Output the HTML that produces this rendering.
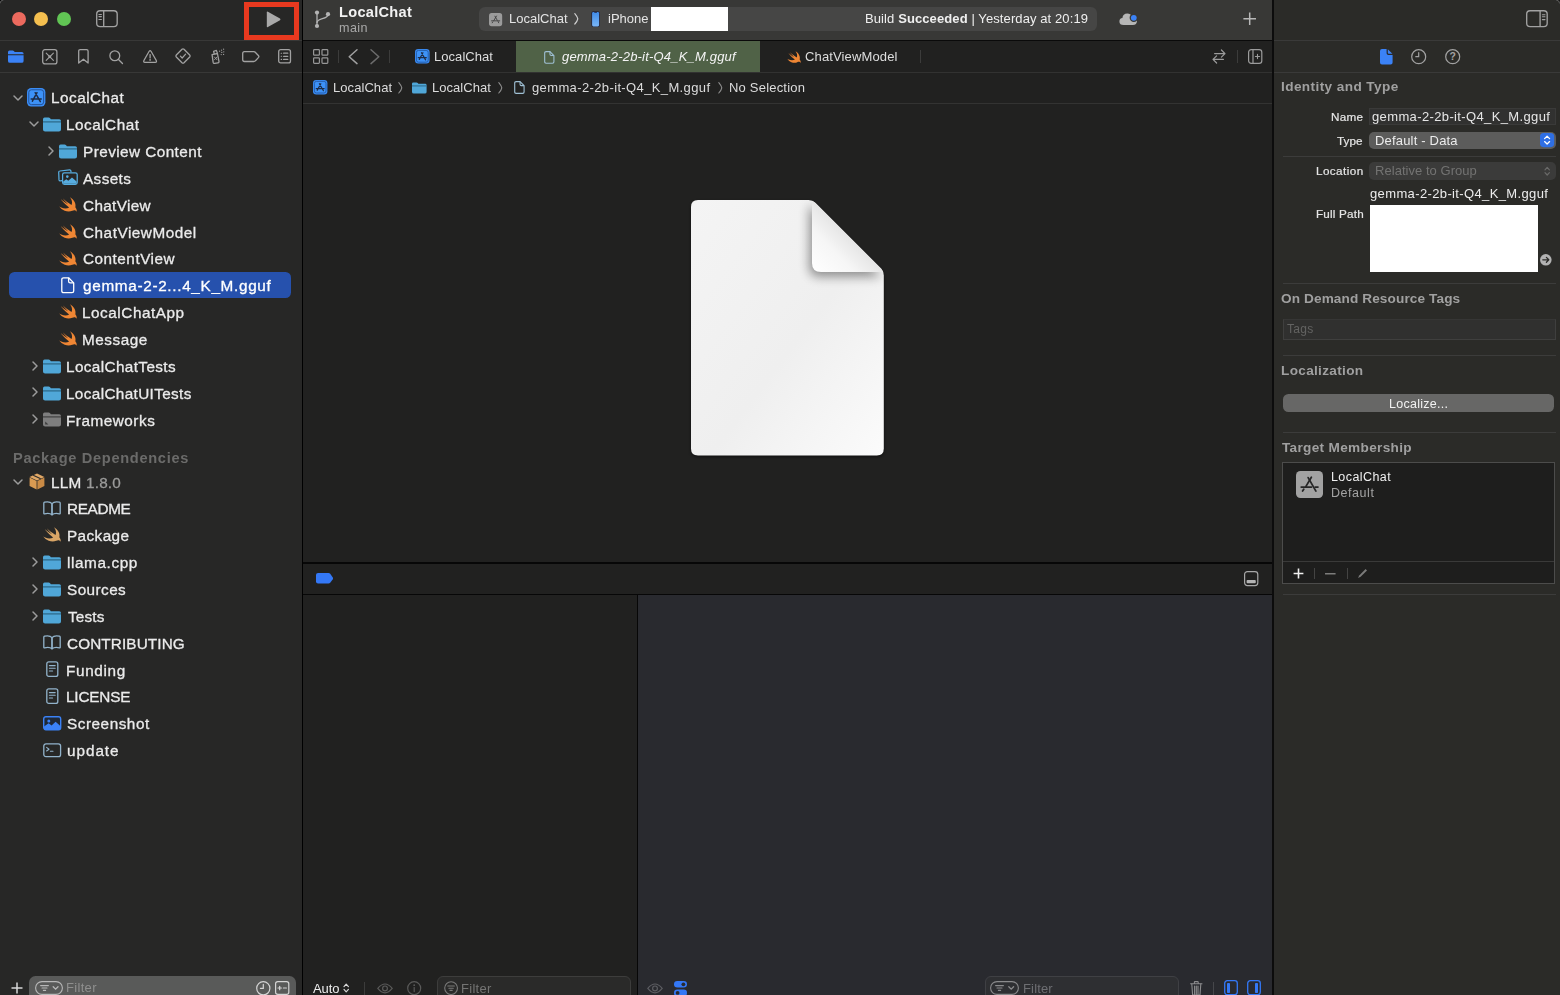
<!DOCTYPE html>
<html lang="en">
<head>
<meta charset="utf-8">
<title>LocalChat — gemma-2-2b-it-Q4_K_M.gguf</title>
<style>
*{box-sizing:border-box;margin:0;padding:0}
html,body{width:1560px;height:995px;overflow:hidden;background:#212120}
body{font-family:"Liberation Sans",sans-serif;color:#e6e6e6;-webkit-font-smoothing:antialiased}
#win{position:relative;width:1560px;height:995px;overflow:hidden;background:#212120}
.abs{position:absolute}
.ic{position:absolute;display:block;overflow:visible}
.t{position:absolute;white-space:nowrap;line-height:1;display:block;will-change:transform}
/* panes */
#nav{position:absolute;left:0;top:0;width:302px;height:995px;background:#272726}
#vd1{position:absolute;left:302px;top:0;width:1px;height:995px;background:#000}
#ctr{position:absolute;left:303px;top:0;width:969px;height:995px;background:#212120}
#vd2{position:absolute;left:1272px;top:0;width:2px;height:995px;background:#0c0c0c}
#insp{position:absolute;left:1274px;top:0;width:286px;height:995px;background:#2b2b28}
.hl{position:absolute;height:1px}
.vl{position:absolute;width:1px}
/* nav text */
.nt{font-size:15px;color:#e9e9e9;letter-spacing:.42px}
.sel{position:absolute;left:9px;top:272px;width:282px;height:26px;border-radius:5.5px;background:#2651ad}
.hdr{font-size:14px;font-weight:bold;color:#6b6b6b;letter-spacing:.1px}
.f13{font-size:13px;letter-spacing:.3px;color:#dcdcdc}
.f12{font-size:12px;letter-spacing:.2px}
.lab{font-size:11.5px;color:#e2e2e2;letter-spacing:.25px;text-align:right}
.sec{font-size:13px;font-weight:bold;color:#a0a0a0;letter-spacing:.05px}
.fld{position:absolute;border-radius:5px}
</style>
</head>
<body>
<div id="win">
<div id="nav">
<div class="abs" style="left:12.1px;top:12px;width:14px;height:14px;border-radius:50%;background:#ec6a5e"></div>
<div class="abs" style="left:34.4px;top:12px;width:14px;height:14px;border-radius:50%;background:#f4bf4f"></div>
<div class="abs" style="left:56.7px;top:12px;width:14px;height:14px;border-radius:50%;background:#61c554"></div>
<svg class="ic" style="left:95.5px;top:9.9px" width="21.9" height="17.3" viewBox="0 0 21.9 17.3" ><g fill="none" stroke="#a2a2a2" stroke-width="1.35"><rect x="0.7" y="0.7" width="20.5" height="15.9" rx="3.4"/><path d="M7.7 0.7 V16.6"/><path d="M2.9 4.5 H5.400 M2.900 6.600 H5.400 M2.900 9.500 H5.400" stroke-width="1.1" stroke-linecap="round"/></g></svg>
<svg class="ic" style="left:0px;top:0px" width="3.6" height="3.6" viewBox="0 0 5 5" ><path d="M0 0 H4.6 Q0 0 0 4.600 Z" fill="#050505"/><path d="M0 4.800 Q0.200 0.200 4.800 0" fill="none" stroke="#7a7a7a" stroke-width="0.9"/></svg>
<div class="abs" style="left:244px;top:2px;width:55px;height:38px;border:5.5px solid #e8391f"></div>
<svg class="ic" style="left:265.5px;top:10.6px" width="15.4" height="16.8" viewBox="0 0 15.4 16.8" ><path d="M0.8 1.4 Q0.8 0.2 1.9 0.8 L14 7.5 Q15 8.4 14 9.3 L1.9 16 Q0.8 16.6 0.8 15.4 Z" fill="#a9a9a9"/></svg>
<div class="hl" style="left:0;top:40px;width:302px;background:#383837"></div>
<div class="hl" style="left:0;top:72px;width:302px;background:#383837"></div>
<svg class="ic" style="left:7.8px;top:49.8px" width="15.6" height="13" viewBox="0 0 16.2 13.2" ><path d="M0 2 Q0 0.4 1.6 0.4 H4.8 Q5.7 0.4 6.3 1.1 L7 2 H14.4 Q16.2 2 16.2 3.8 V4.2 H0 Z" fill="#3b82f6"/><path d="M0 5.2 H16.2 V11.2 Q16.2 13.2 14.2 13.2 H2 Q0 13.2 0 11.2 Z" fill="#3b82f6"/></svg>
<svg class="ic" style="left:41.6px;top:48.6px" width="15.6" height="15.6" viewBox="0 0 15.6 15.6" ><g fill="none" stroke="#a2a2a2" stroke-width="1.3" stroke-linecap="round" stroke-linejoin="round"><rect x="0.7" y="0.7" width="14.2" height="14.2" rx="2.2"/><path d="M4.2 4.2 L11.4 11.4 M11.4 4.2 L4.2 11.4" stroke-width="1.1"/></g><circle cx="7.8" cy="7.8" r="1.5" fill="#a2a2a2"/></svg>
<svg class="ic" style="left:77.6px;top:49px" width="10.8" height="15" viewBox="0 0 10.8 15" ><g fill="none" stroke="#a2a2a2" stroke-width="1.3" stroke-linecap="round" stroke-linejoin="round"><path d="M0.7 2.2 Q0.7 0.7 2.2 0.7 H8.6 Q10.1 0.7 10.1 2.2 V14 L5.4 10.2 L0.7 14 Z"/></g></svg>
<svg class="ic" style="left:109.4px;top:49.6px" width="14.4" height="14.4" viewBox="0 0 14.4 14.4" ><g fill="none" stroke="#a2a2a2" stroke-width="1.3" stroke-linecap="round" stroke-linejoin="round" stroke-width="1.5"><circle cx="5.8" cy="5.8" r="4.9"/><path d="M9.5 9.5 L13.5 13.5"/></g></svg>
<svg class="ic" style="left:142.9px;top:49.6px" width="14.2" height="13" viewBox="0 0 15.2 13.8" ><g fill="none" stroke="#a2a2a2" stroke-width="1.3" stroke-linecap="round" stroke-linejoin="round"><path d="M6.6 1.3 Q7.6 -0.1 8.6 1.3 L14.3 11.3 Q15 13 13.2 13.1 H2 Q0.2 13 0.9 11.3 Z"/><path d="M7.6 4.8 V8.4" stroke-width="1.4"/></g><circle cx="7.6" cy="10.6" r="0.9" fill="#a2a2a2"/></svg>
<svg class="ic" style="left:175.4px;top:48.4px" width="16" height="16" viewBox="0 0 16 16" ><g fill="none" stroke="#a2a2a2" stroke-width="1.3" stroke-linecap="round" stroke-linejoin="round"><path d="M7 1.3 Q8 0.4 9 1.3 L14.7 7 Q15.6 8 14.7 9 L9 14.7 Q8 15.6 7 14.7 L1.3 9 Q0.4 8 1.3 7 Z"/><path d="M5.4 8.2 L7.2 10 L10.6 6.2" stroke-width="1.2"/></g></svg>
<svg class="ic" style="left:208.6px;top:48.4px" width="17.4" height="16" viewBox="0 0 17.4 16" ><g fill="none" stroke="#a2a2a2" stroke-width="1.3" stroke-linecap="round" stroke-linejoin="round" stroke-width="1.1"><path d="M2.6 7 L7.8 5.2 L10.4 12.8 Q10.8 14 9.6 14.4 L6.4 15.4 Q5.2 15.8 4.8 14.6 Z" transform="rotate(8 6 10)"/><path d="M5.2 5.6 L4.6 3.4 L7.4 2.4 L8.2 4.6"/><path d="M5.4 9 L8 11.8 M8 9 L5.6 11.6" stroke-width="0.9"/></g><g fill="#a2a2a2"><circle cx="10.6" cy="3.2" r=".6"/><circle cx="12.6" cy="2.2" r=".6"/><circle cx="14.6" cy="1.2" r=".6"/><circle cx="12.8" cy="4.4" r=".6"/><circle cx="14.8" cy="3.8" r=".6"/><circle cx="12.2" cy="6.6" r=".6"/><circle cx="14.6" cy="6.4" r=".6"/></g></svg>
<svg class="ic" style="left:241.6px;top:51px" width="17.6" height="11.2" viewBox="0 0 17.6 11.2" ><g fill="none" stroke="#a2a2a2" stroke-width="1.3" stroke-linecap="round" stroke-linejoin="round"><path d="M2.4 0.7 H11.8 Q12.8 0.7 13.5 1.5 L16.6 4.8 Q17.2 5.6 16.6 6.4 L13.5 9.7 Q12.8 10.5 11.8 10.5 H2.4 Q0.7 10.5 0.7 8.8 V2.4 Q0.7 0.7 2.4 0.7 Z"/></g></svg>
<svg class="ic" style="left:278px;top:49px" width="13.2" height="14.6" viewBox="0 0 13.2 14.6" ><g fill="none" stroke="#a2a2a2" stroke-width="1.3" stroke-linecap="round" stroke-linejoin="round"><rect x="0.7" y="0.7" width="11.8" height="13.2" rx="2"/><path d="M5.6 4.2 H9.8 M5.6 7.3 H9.8 M5.6 10.4 H9.8" stroke-width="1.2"/><path d="M3.2 4.2 H3.6 M3.2 7.3 H3.6 M3.2 10.4 H3.6" stroke-width="1.1"/></g></svg>
<div class="sel"></div>
<svg class="ic" style="left:12.9px;top:94.6px" width="10" height="6" viewBox="0 0 10 6" ><path d="M1 1 L5 5 L9 1" fill="none" stroke="#9c9c9c" stroke-width="1.5" stroke-linecap="round" stroke-linejoin="round"/></svg>
<svg class="ic" style="left:27.2px;top:87.9px" width="18.4" height="18.4" viewBox="0 0 16 16" ><rect x="0" y="0" width="16" height="16" rx="3.6" fill="#3a8cf4"/><rect x="1.55" y="1.55" width="12.9" height="12.9" rx="2.3" fill="#3d92f7" stroke="#21529a" stroke-width="0.85"/><path d="M8.7 4.1 L4.7 11.5 M7.1 4.1 L11.6 11.9 M3.6 9.5 H12.4" fill="none" stroke="#1e2c46" stroke-width="1.3" stroke-linecap="round"/></svg>
<span class="t" style="left:50.84px;top:89.87px;font-size:15.3px;letter-spacing:0.497px;color:#ebebeb;-webkit-text-stroke:0.3px #ebebeb;">LocalChat</span>
<svg class="ic" style="left:28.9px;top:121.44999999999999px" width="10" height="6" viewBox="0 0 10 6" ><path d="M1 1 L5 5 L9 1" fill="none" stroke="#9c9c9c" stroke-width="1.5" stroke-linecap="round" stroke-linejoin="round"/></svg>
<svg class="ic" style="left:43.4px;top:117.05px" width="18" height="14.5" viewBox="0 0 18 14.5" preserveAspectRatio="none"><path d="M0 2.2 Q0 0.6 1.6 0.6 H5.6 Q6.5 0.6 7.1 1.3 L7.9 2.2 H16.2 Q18 2.2 18 4 V12.4 Q18 14.5 15.9 14.5 H2.1 Q0 14.5 0 12.4 Z" fill="#50a7d8"/><path d="M0 4.9 H18" stroke="#27607f" stroke-width="1.1"/></svg>
<span class="t" style="left:66.44px;top:116.87px;font-size:15.3px;letter-spacing:0.509px;color:#ebebeb;-webkit-text-stroke:0.3px #ebebeb;">LocalChat</span>
<svg class="ic" style="left:47.7px;top:145.7px" width="6" height="10" viewBox="0 0 6 10" ><path d="M1 1 L5 5 L1 9" fill="none" stroke="#9c9c9c" stroke-width="1.5" stroke-linecap="round" stroke-linejoin="round"/></svg>
<svg class="ic" style="left:59.4px;top:143.89999999999998px" width="18" height="14.5" viewBox="0 0 18 14.5" preserveAspectRatio="none"><path d="M0 2.2 Q0 0.6 1.6 0.6 H5.6 Q6.5 0.6 7.1 1.3 L7.9 2.2 H16.2 Q18 2.2 18 4 V12.4 Q18 14.5 15.9 14.5 H2.1 Q0 14.5 0 12.4 Z" fill="#50a7d8"/><path d="M0 4.9 H18" stroke="#27607f" stroke-width="1.1"/></svg>
<span class="t" style="left:82.54px;top:143.87px;font-size:15.3px;letter-spacing:0.444px;color:#ebebeb;-webkit-text-stroke:0.3px #ebebeb;">Preview Content</span>
<svg class="ic" style="left:58.3px;top:168.95000000000002px" width="20" height="16.6" viewBox="0 0 20 16.6" ><g fill="none" stroke="#57ade0" stroke-width="1.25" stroke-linejoin="round"><path d="M4.2 11.6 L2.3 11.9 Q1.2 12 1 10.9 L0.7 3.2 Q0.7 2.1 1.8 2 L11.6 0.8 Q12.7 0.7 12.9 1.8 L13 3.3"/><rect x="4.6" y="3.8" width="14.6" height="11.6" rx="1.8"/></g><circle cx="9.3" cy="7.6" r="1.3" fill="#57ade0"/><path d="M5.2 14.8 V12.6 L8.3 10.3 L10.3 11.8 L14 8.4 L18.6 12.4 V14.8 Z" fill="#57ade0"/></svg>
<span class="t" style="left:83.47px;top:170.87px;font-size:15.3px;letter-spacing:0.394px;color:#ebebeb;-webkit-text-stroke:0.3px #ebebeb;">Assets</span>
<svg class="ic" style="left:59.4px;top:196.8px" width="18" height="15" viewBox="2.2 3.2 18.6 16.8" preserveAspectRatio="none"><path d="M13.543 3.41c4.114 2.47 6.545 7.162 5.549 11.131-.024.093-.05.181-.076.272l.002.001c2.062 2.538 1.5 5.258 1.236 4.745-1.072-2.086-3.066-1.568-4.088-1.043a6.803 6.803 0 0 1-.281.158l-.02.012-.002.002c-2.115 1.123-4.957 1.205-7.812-.022a12.568 12.568 0 0 1-5.64-4.838c.649.48 1.35.902 2.097 1.252 3.019 1.414 6.051 1.311 8.197-.002C9.651 12.73 7.101 9.67 5.146 7.191a10.628 10.628 0 0 1-1.005-1.384c2.34 2.142 6.038 4.83 7.365 5.576C8.69 8.408 6.208 4.743 6.324 4.86c4.436 4.47 8.528 6.996 8.528 6.996.154.085.27.154.36.213.085-.215.16-.437.224-.668.708-2.588-.09-5.548-1.893-7.992z" fill="#ef8634"/></svg>
<span class="t" style="left:83.02px;top:197.87px;font-size:15.3px;letter-spacing:0.351px;color:#ebebeb;-webkit-text-stroke:0.3px #ebebeb;">ChatView</span>
<svg class="ic" style="left:59.4px;top:223.65px" width="18" height="15" viewBox="2.2 3.2 18.6 16.8" preserveAspectRatio="none"><path d="M13.543 3.41c4.114 2.47 6.545 7.162 5.549 11.131-.024.093-.05.181-.076.272l.002.001c2.062 2.538 1.5 5.258 1.236 4.745-1.072-2.086-3.066-1.568-4.088-1.043a6.803 6.803 0 0 1-.281.158l-.02.012-.002.002c-2.115 1.123-4.957 1.205-7.812-.022a12.568 12.568 0 0 1-5.64-4.838c.649.48 1.35.902 2.097 1.252 3.019 1.414 6.051 1.311 8.197-.002C9.651 12.73 7.101 9.67 5.146 7.191a10.628 10.628 0 0 1-1.005-1.384c2.34 2.142 6.038 4.83 7.365 5.576C8.69 8.408 6.208 4.743 6.324 4.86c4.436 4.47 8.528 6.996 8.528 6.996.154.085.27.154.36.213.085-.215.16-.437.224-.668.708-2.588-.09-5.548-1.893-7.992z" fill="#ef8634"/></svg>
<span class="t" style="left:82.82px;top:224.87px;font-size:15.3px;letter-spacing:0.529px;color:#ebebeb;-webkit-text-stroke:0.3px #ebebeb;">ChatViewModel</span>
<svg class="ic" style="left:59.4px;top:250.50000000000003px" width="18" height="15" viewBox="2.2 3.2 18.6 16.8" preserveAspectRatio="none"><path d="M13.543 3.41c4.114 2.47 6.545 7.162 5.549 11.131-.024.093-.05.181-.076.272l.002.001c2.062 2.538 1.5 5.258 1.236 4.745-1.072-2.086-3.066-1.568-4.088-1.043a6.803 6.803 0 0 1-.281.158l-.02.012-.002.002c-2.115 1.123-4.957 1.205-7.812-.022a12.568 12.568 0 0 1-5.64-4.838c.649.48 1.35.902 2.097 1.252 3.019 1.414 6.051 1.311 8.197-.002C9.651 12.73 7.101 9.67 5.146 7.191a10.628 10.628 0 0 1-1.005-1.384c2.34 2.142 6.038 4.83 7.365 5.576C8.69 8.408 6.208 4.743 6.324 4.86c4.436 4.47 8.528 6.996 8.528 6.996.154.085.27.154.36.213.085-.215.16-.437.224-.668.708-2.588-.09-5.548-1.893-7.992z" fill="#ef8634"/></svg>
<span class="t" style="left:82.82px;top:250.87px;font-size:15.3px;letter-spacing:0.509px;color:#ebebeb;-webkit-text-stroke:0.3px #ebebeb;">ContentView</span>
<svg class="ic" style="left:61.4px;top:276.55000000000007px" width="13.5" height="16.5" viewBox="0 0 13.5 16.5" ><g fill="none" stroke="#ffffff" stroke-width="1.3" stroke-linejoin="round"><path d="M2.6 0.8 H7.6 L12.7 5.9 V14 Q12.7 15.7 11 15.7 H2.6 Q0.8 15.7 0.8 14 V2.5 Q0.8 0.8 2.6 0.8 Z"/><path d="M7.6 0.8 V4.3 Q7.6 5.9 9.2 5.9 H12.7"/></g></svg>
<span class="t" style="left:82.96px;top:277.87px;font-size:15.3px;letter-spacing:0.683px;color:#ffffff;-webkit-text-stroke:0.3px #ffffff;">gemma-2-2...4_K_M.gguf</span>
<svg class="ic" style="left:59.4px;top:304.2px" width="18" height="15" viewBox="2.2 3.2 18.6 16.8" preserveAspectRatio="none"><path d="M13.543 3.41c4.114 2.47 6.545 7.162 5.549 11.131-.024.093-.05.181-.076.272l.002.001c2.062 2.538 1.5 5.258 1.236 4.745-1.072-2.086-3.066-1.568-4.088-1.043a6.803 6.803 0 0 1-.281.158l-.02.012-.002.002c-2.115 1.123-4.957 1.205-7.812-.022a12.568 12.568 0 0 1-5.64-4.838c.649.48 1.35.902 2.097 1.252 3.019 1.414 6.051 1.311 8.197-.002C9.651 12.73 7.101 9.67 5.146 7.191a10.628 10.628 0 0 1-1.005-1.384c2.34 2.142 6.038 4.83 7.365 5.576C8.69 8.408 6.208 4.743 6.324 4.86c4.436 4.47 8.528 6.996 8.528 6.996.154.085.27.154.36.213.085-.215.16-.437.224-.668.708-2.588-.09-5.548-1.893-7.992z" fill="#ef8634"/></svg>
<span class="t" style="left:82.34px;top:304.87px;font-size:15.3px;letter-spacing:0.544px;color:#ebebeb;-webkit-text-stroke:0.3px #ebebeb;">LocalChatApp</span>
<svg class="ic" style="left:59.4px;top:331.04999999999995px" width="18" height="15" viewBox="2.2 3.2 18.6 16.8" preserveAspectRatio="none"><path d="M13.543 3.41c4.114 2.47 6.545 7.162 5.549 11.131-.024.093-.05.181-.076.272l.002.001c2.062 2.538 1.5 5.258 1.236 4.745-1.072-2.086-3.066-1.568-4.088-1.043a6.803 6.803 0 0 1-.281.158l-.02.012-.002.002c-2.115 1.123-4.957 1.205-7.812-.022a12.568 12.568 0 0 1-5.64-4.838c.649.48 1.35.902 2.097 1.252 3.019 1.414 6.051 1.311 8.197-.002C9.651 12.73 7.101 9.67 5.146 7.191a10.628 10.628 0 0 1-1.005-1.384c2.34 2.142 6.038 4.83 7.365 5.576C8.69 8.408 6.208 4.743 6.324 4.86c4.436 4.47 8.528 6.996 8.528 6.996.154.085.27.154.36.213.085-.215.16-.437.224-.668.708-2.588-.09-5.548-1.893-7.992z" fill="#ef8634"/></svg>
<span class="t" style="left:82.34px;top:331.87px;font-size:15.3px;letter-spacing:0.542px;color:#ebebeb;-webkit-text-stroke:0.3px #ebebeb;">Message</span>
<svg class="ic" style="left:31.7px;top:360.5px" width="6" height="10" viewBox="0 0 6 10" ><path d="M1 1 L5 5 L1 9" fill="none" stroke="#9c9c9c" stroke-width="1.5" stroke-linecap="round" stroke-linejoin="round"/></svg>
<svg class="ic" style="left:43.4px;top:358.7px" width="18" height="14.5" viewBox="0 0 18 14.5" preserveAspectRatio="none"><path d="M0 2.2 Q0 0.6 1.6 0.6 H5.6 Q6.5 0.6 7.1 1.3 L7.9 2.2 H16.2 Q18 2.2 18 4 V12.4 Q18 14.5 15.9 14.5 H2.1 Q0 14.5 0 12.4 Z" fill="#50a7d8"/><path d="M0 4.9 H18" stroke="#27607f" stroke-width="1.1"/></svg>
<span class="t" style="left:66.24px;top:358.87px;font-size:15.3px;letter-spacing:0.385px;color:#ebebeb;-webkit-text-stroke:0.3px #ebebeb;">LocalChatTests</span>
<svg class="ic" style="left:31.7px;top:387.35px" width="6" height="10" viewBox="0 0 6 10" ><path d="M1 1 L5 5 L1 9" fill="none" stroke="#9c9c9c" stroke-width="1.5" stroke-linecap="round" stroke-linejoin="round"/></svg>
<svg class="ic" style="left:43.4px;top:385.55px" width="18" height="14.5" viewBox="0 0 18 14.5" preserveAspectRatio="none"><path d="M0 2.2 Q0 0.6 1.6 0.6 H5.6 Q6.5 0.6 7.1 1.3 L7.9 2.2 H16.2 Q18 2.2 18 4 V12.4 Q18 14.5 15.9 14.5 H2.1 Q0 14.5 0 12.4 Z" fill="#50a7d8"/><path d="M0 4.9 H18" stroke="#27607f" stroke-width="1.1"/></svg>
<span class="t" style="left:66.24px;top:385.87px;font-size:15.3px;letter-spacing:0.367px;color:#ebebeb;-webkit-text-stroke:0.3px #ebebeb;">LocalChatUITests</span>
<svg class="ic" style="left:31.7px;top:414.20000000000005px" width="6" height="10" viewBox="0 0 6 10" ><path d="M1 1 L5 5 L1 9" fill="none" stroke="#9c9c9c" stroke-width="1.5" stroke-linecap="round" stroke-linejoin="round"/></svg>
<svg class="ic" style="left:43.4px;top:412.40000000000003px" width="18" height="14.5" viewBox="0 0 18 14.5" preserveAspectRatio="none"><path d="M0 2.2 Q0 0.6 1.6 0.6 H5.6 Q6.5 0.6 7.1 1.3 L7.9 2.2 H16.2 Q18 2.2 18 4 V12.4 Q18 14.5 15.9 14.5 H2.1 Q0 14.5 0 12.4 Z" fill="#7e7e7e"/><path d="M0 4.9 H18" stroke="#3c3c3c" stroke-width="1.1"/><path d="M2.2 9.6 L5.4 12.6 H2.2 Z" fill="#3c3c3c"/></svg>
<span class="t" style="left:66.24px;top:412.87px;font-size:15.3px;letter-spacing:0.517px;color:#ebebeb;-webkit-text-stroke:0.3px #ebebeb;">Frameworks</span>
<span class="t" style="left:13.22px;top:450.72px;font-size:14.6px;letter-spacing:0.688px;color:#6b6b6a;font-weight:bold;">Package Dependencies</span>
<svg class="ic" style="left:12.9px;top:478.95000000000005px" width="10" height="6" viewBox="0 0 10 6" ><path d="M1 1 L5 5 L9 1" fill="none" stroke="#9c9c9c" stroke-width="1.5" stroke-linecap="round" stroke-linejoin="round"/></svg>
<svg class="ic" style="left:28.9px;top:472.75px" width="16" height="17" viewBox="0 0 16 17" ><path d="M8 0.5 L15.4 3.9 L8 7.4 L0.6 3.9 Z" fill="#e0a765"/><path d="M0.6 4.6 L7.6 8 V16.4 L0.6 13 Z" fill="#d99a52"/><path d="M8.4 8 L15.4 4.6 V13 L8.4 16.4 Z" fill="#c98a45"/><path d="M4.2 2.2 L11.7 5.7" stroke="#2a2a2a" stroke-width="1.1"/></svg>
<span class="t" style="left:51.14px;top:474.87px;font-size:15.3px;letter-spacing:0.226px;color:#ebebeb;-webkit-text-stroke:0.3px #ebebeb;">LLM <span style="color:#9b9b9a;-webkit-text-stroke-color:#9b9b9a">1.8.0</span></span>
<svg class="ic" style="left:43.1px;top:501.00000000000006px" width="18" height="14.6" viewBox="0 0 18 14.6" ><g fill="none" stroke="#92b3cb" stroke-width="1.3" stroke-linejoin="round"><path d="M9 2.6 C7.6 1 4.4 0.6 1.6 1.2 Q0.8 1.4 0.8 2.2 V12.2 Q0.8 13 1.6 12.8 C4.4 12.2 7.6 12.6 9 13.8 Z"/><path d="M9 2.6 C10.4 1 13.6 0.6 16.4 1.2 Q17.2 1.4 17.2 2.2 V12.2 Q17.2 13 16.4 12.8 C13.6 12.2 10.4 12.6 9 13.8 Z"/></g></svg>
<span class="t" style="left:66.64px;top:500.87px;font-size:15.3px;letter-spacing:-0.329px;color:#ebebeb;-webkit-text-stroke:0.3px #ebebeb;">README</span>
<svg class="ic" style="left:43.4px;top:527.45px" width="18" height="15" viewBox="2.2 3.2 18.6 16.8" preserveAspectRatio="none"><path d="M13.543 3.41c4.114 2.47 6.545 7.162 5.549 11.131-.024.093-.05.181-.076.272l.002.001c2.062 2.538 1.5 5.258 1.236 4.745-1.072-2.086-3.066-1.568-4.088-1.043a6.803 6.803 0 0 1-.281.158l-.02.012-.002.002c-2.115 1.123-4.957 1.205-7.812-.022a12.568 12.568 0 0 1-5.64-4.838c.649.48 1.35.902 2.097 1.252 3.019 1.414 6.051 1.311 8.197-.002C9.651 12.73 7.101 9.67 5.146 7.191a10.628 10.628 0 0 1-1.005-1.384c2.34 2.142 6.038 4.83 7.365 5.576C8.69 8.408 6.208 4.743 6.324 4.86c4.436 4.47 8.528 6.996 8.528 6.996.154.085.27.154.36.213.085-.215.16-.437.224-.668.708-2.588-.09-5.548-1.893-7.992z" fill="#d9a566"/></svg>
<span class="t" style="left:66.64px;top:527.87px;font-size:15.3px;letter-spacing:0.416px;color:#ebebeb;-webkit-text-stroke:0.3px #ebebeb;">Package</span>
<svg class="ic" style="left:31.7px;top:556.9000000000001px" width="6" height="10" viewBox="0 0 6 10" ><path d="M1 1 L5 5 L1 9" fill="none" stroke="#9c9c9c" stroke-width="1.5" stroke-linecap="round" stroke-linejoin="round"/></svg>
<svg class="ic" style="left:43.4px;top:555.1000000000001px" width="18" height="14.5" viewBox="0 0 18 14.5" preserveAspectRatio="none"><path d="M0 2.2 Q0 0.6 1.6 0.6 H5.6 Q6.5 0.6 7.1 1.3 L7.9 2.2 H16.2 Q18 2.2 18 4 V12.4 Q18 14.5 15.9 14.5 H2.1 Q0 14.5 0 12.4 Z" fill="#50a7d8"/><path d="M0 4.9 H18" stroke="#27607f" stroke-width="1.1"/></svg>
<span class="t" style="left:66.87px;top:554.87px;font-size:15.3px;letter-spacing:0.599px;color:#ebebeb;-webkit-text-stroke:0.3px #ebebeb;">llama.cpp</span>
<svg class="ic" style="left:31.7px;top:583.75px" width="6" height="10" viewBox="0 0 6 10" ><path d="M1 1 L5 5 L1 9" fill="none" stroke="#9c9c9c" stroke-width="1.5" stroke-linecap="round" stroke-linejoin="round"/></svg>
<svg class="ic" style="left:43.4px;top:581.95px" width="18" height="14.5" viewBox="0 0 18 14.5" preserveAspectRatio="none"><path d="M0 2.2 Q0 0.6 1.6 0.6 H5.6 Q6.5 0.6 7.1 1.3 L7.9 2.2 H16.2 Q18 2.2 18 4 V12.4 Q18 14.5 15.9 14.5 H2.1 Q0 14.5 0 12.4 Z" fill="#50a7d8"/><path d="M0 4.9 H18" stroke="#27607f" stroke-width="1.1"/></svg>
<span class="t" style="left:67.21px;top:581.87px;font-size:15.3px;letter-spacing:0.437px;color:#ebebeb;-webkit-text-stroke:0.3px #ebebeb;">Sources</span>
<svg class="ic" style="left:31.7px;top:610.6px" width="6" height="10" viewBox="0 0 6 10" ><path d="M1 1 L5 5 L1 9" fill="none" stroke="#9c9c9c" stroke-width="1.5" stroke-linecap="round" stroke-linejoin="round"/></svg>
<svg class="ic" style="left:43.4px;top:608.8000000000001px" width="18" height="14.5" viewBox="0 0 18 14.5" preserveAspectRatio="none"><path d="M0 2.2 Q0 0.6 1.6 0.6 H5.6 Q6.5 0.6 7.1 1.3 L7.9 2.2 H16.2 Q18 2.2 18 4 V12.4 Q18 14.5 15.9 14.5 H2.1 Q0 14.5 0 12.4 Z" fill="#50a7d8"/><path d="M0 4.9 H18" stroke="#27607f" stroke-width="1.1"/></svg>
<span class="t" style="left:67.56px;top:608.87px;font-size:15.3px;letter-spacing:0.148px;color:#ebebeb;-webkit-text-stroke:0.3px #ebebeb;">Tests</span>
<svg class="ic" style="left:43.1px;top:635.25px" width="18" height="14.6" viewBox="0 0 18 14.6" ><g fill="none" stroke="#92b3cb" stroke-width="1.3" stroke-linejoin="round"><path d="M9 2.6 C7.6 1 4.4 0.6 1.6 1.2 Q0.8 1.4 0.8 2.2 V12.2 Q0.8 13 1.6 12.8 C4.4 12.2 7.6 12.6 9 13.8 Z"/><path d="M9 2.6 C10.4 1 13.6 0.6 16.4 1.2 Q17.2 1.4 17.2 2.2 V12.2 Q17.2 13 16.4 12.8 C13.6 12.2 10.4 12.6 9 13.8 Z"/></g></svg>
<span class="t" style="left:66.82px;top:635.87px;font-size:15.3px;letter-spacing:0.116px;color:#ebebeb;-webkit-text-stroke:0.3px #ebebeb;">CONTRIBUTING</span>
<svg class="ic" style="left:45.9px;top:661.1px" width="12.6" height="16.2" viewBox="0 0 12.6 16.2" ><g fill="none" stroke="#92b3cb" stroke-width="1.3"><rect x="0.8" y="0.8" width="11" height="14.6" rx="2"/><path d="M3.4 4.6 H9.2 M3.4 7.3 H9.2 M3.4 10 H6.6" stroke-width="1.1" stroke-linecap="round"/></g></svg>
<span class="t" style="left:66.34px;top:662.87px;font-size:15.3px;letter-spacing:0.658px;color:#ebebeb;-webkit-text-stroke:0.3px #ebebeb;">Funding</span>
<svg class="ic" style="left:45.9px;top:687.95px" width="12.6" height="16.2" viewBox="0 0 12.6 16.2" ><g fill="none" stroke="#92b3cb" stroke-width="1.3"><rect x="0.8" y="0.8" width="11" height="14.6" rx="2"/><path d="M3.4 4.6 H9.2 M3.4 7.3 H9.2 M3.4 10 H6.6" stroke-width="1.1" stroke-linecap="round"/></g></svg>
<span class="t" style="left:66.34px;top:688.87px;font-size:15.3px;letter-spacing:-0.177px;color:#ebebeb;-webkit-text-stroke:0.3px #ebebeb;">LICENSE</span>
<svg class="ic" style="left:42.9px;top:715.8px" width="18.4" height="14.4" viewBox="0 0 18.4 14.4" ><rect x="0.7" y="0.7" width="17" height="13" rx="2.2" fill="#1f2937" stroke="#3b82f6" stroke-width="1.4"/><circle cx="5.8" cy="4.9" r="1.5" fill="#3b82f6"/><path d="M1 12.8 V10.4 L5.6 7.2 L8.6 9.4 L12.6 5.8 L17.4 10 V12.8 Q17.4 13.700 16.200 13.700 H2.200 Q1 13.700 1 12.800 Z" fill="#3b82f6"/></svg>
<span class="t" style="left:66.91px;top:715.87px;font-size:15.3px;letter-spacing:0.534px;color:#ebebeb;-webkit-text-stroke:0.3px #ebebeb;">Screenshot</span>
<svg class="ic" style="left:42.9px;top:742.65px" width="18.4" height="14.4" viewBox="0 0 18.4 14.4" ><g fill="none" stroke="#92b3cb" stroke-width="1.3" stroke-linecap="round" stroke-linejoin="round"><rect x="0.8" y="0.8" width="16.8" height="12.8" rx="2.2"/><path d="M3.6 4.4 L6 6.2 L3.6 8" stroke-width="1.1"/><path d="M7.4 8.2 H10" stroke-width="1.1"/></g></svg>
<span class="t" style="left:66.61px;top:742.87px;font-size:15.3px;letter-spacing:0.955px;color:#ebebeb;-webkit-text-stroke:0.3px #ebebeb;">update</span>
<svg class="ic" style="left:10.6px;top:982px" width="12" height="12" viewBox="0 0 12 12" ><path d="M6 0.5 V11.5 M0.5 6 H11.5" stroke="#d8d8d8" stroke-width="1.5" fill="none"/></svg>
<div class="abs" style="left:29px;top:976px;width:267.4px;height:26px;border-radius:6.5px;background:#595a59"></div>
<svg class="ic" style="left:35px;top:981px" width="28" height="14" viewBox="0 0 28 14" ><g fill="none" stroke="#b8b8b8" stroke-width="1.1" stroke-linecap="round"><rect x="0.6" y="0.6" width="26.8" height="12.8" rx="6.4"/><path d="M5.6 4.6 H13.4 M7 7 H12 M8.4 9.4 H10.6"/><path d="M18.2 5.8 L20.6 8.2 L23 5.8" stroke-width="1.3"/></g></svg>
<span class="t" style="left:66.23px;top:981.02px;font-size:13px;letter-spacing:0.319px;color:#8f8f8e;">Filter</span>
<svg class="ic" style="left:256px;top:980.6px" width="14.6" height="14.6" viewBox="0 0 14.6 14.6" ><g fill="none" stroke="#d4d4d4" stroke-width="1.2" stroke-linecap="round"><circle cx="7.3" cy="7.3" r="6.6"/><path d="M7.3 3.4 V7.3 H4.4"/></g></svg>
<svg class="ic" style="left:275.4px;top:981px" width="14.4" height="14" viewBox="0 0 14.4 14" ><g fill="none" stroke="#d4d4d4" stroke-width="1.2" stroke-linecap="round"><rect x="0.6" y="0.6" width="13.2" height="12.8" rx="2.2"/><path d="M3 7 H6.4 M4.7 5.3 V8.7 M8.4 7 H11.4"/></g></svg>
</div>
<div id="vd1"></div>
<div id="ctr">
<div class="abs" style="left:0;top:0;width:969px;height:40px;background:#383836"></div>
<div class="hl" style="left:0;top:39.6px;width:969px;height:1.9px;background:#0a0a0a"></div>
<svg class="ic" style="left:10.6px;top:10px" width="17" height="19" viewBox="0 0 17 19" ><g fill="none" stroke="#b4b4b4" stroke-width="1.3" stroke-linecap="round"><path d="M3 3 V15.6"/><path d="M14 4.4 C14 9.4 3 8 3 12.6"/></g><g fill="#b4b4b4"><circle cx="3" cy="2.6" r="2.1"/><circle cx="14" cy="4.2" r="2.1"/><circle cx="3" cy="16" r="2.1"/></g></svg>
<span class="t" style="left:35.62px;top:4.72px;font-size:14.6px;letter-spacing:0.285px;color:#f2f2f2;font-weight:bold;">LocalChat</span>
<span class="t" style="left:35.96px;top:21.72px;font-size:12.6px;letter-spacing:0.415px;color:#a9a9a9;">main</span>
<div class="abs" style="left:176px;top:7px;width:618px;height:24px;border-radius:6px;background:#464645"></div>
<svg class="ic" style="left:186px;top:12.6px" width="13.2" height="13.2" viewBox="0 0 16 16" ><rect x="0" y="0" width="16" height="16" rx="3.2" fill="#9b9b9b"/><g fill="none" stroke="#3a3a3a" stroke-width="1.05" stroke-linecap="round"><path d="M9.1 3.7 L5.9 9.1"/><path d="M4.6 10.8 L3.9 11.9"/><path d="M7.2 3.9 L11.8 11.9"/><path d="M3.1 9.5 H9.2"/><path d="M11.4 9.5 H13"/></g></svg>
<span class="t" style="left:205.53px;top:12.02px;font-size:13px;letter-spacing:0.003px;color:#e4e4e4;">LocalChat</span>
<svg class="ic" style="left:270.6px;top:13.4px" width="5" height="11.6" viewBox="0 0 5 11.6" ><path d="M0.8 0.6 Q3.4 3.6 3.8 5.8 Q3.4 8 0.8 11" fill="none" stroke="#d0d0d0" stroke-width="1.2" stroke-linecap="round"/></svg>
<svg class="ic" style="left:287.8px;top:10.6px" width="9.2" height="16.4" viewBox="0 0 9.2 16.4" ><defs><linearGradient id="ipg" x1="0" y1="0" x2="0" y2="1"><stop offset="0" stop-color="#3f8ae8"/><stop offset="1" stop-color="#79b6f7"/></linearGradient></defs><rect x="0.3" y="0.3" width="8.6" height="15.8" rx="2" fill="#23233a"/><rect x="1.1" y="1" width="7" height="14.4" rx="1.3" fill="url(#ipg)"/><rect x="3.2" y="0.9" width="2.8" height="0.9" rx=".4" fill="#23233a"/></svg>
<span class="t" style="left:305.03px;top:12.02px;font-size:13px;letter-spacing:0.014px;color:#e4e4e4;">iPhone</span>
<div class="abs" style="left:347.8px;top:7px;width:77.4px;height:24px;background:#fff"></div>
<span class="t" style="left:561.53px;top:12.02px;font-size:13px;letter-spacing:0.100px;color:#efefef;">Build <b>Succeeded</b> | Yesterday at 20:19</span>
<svg class="ic" style="left:816px;top:12.4px" width="19" height="13.4" viewBox="0 0 19 13.4" ><path d="M4.6 13 Q0.4 13 0.4 9.4 Q0.4 6.4 3.4 6 Q3.8 1.4 8.4 1.4 Q11.6 1.4 12.8 4.2 Q18 4.2 18 8.8 Q18 13 13.8 13 Z" fill="#b6b6b6"/><circle cx="14.8" cy="5.8" r="4.2" fill="#383836"/><circle cx="14.8" cy="5.8" r="2.9" fill="#3b82f6"/></svg>
<svg class="ic" style="left:940.4px;top:12.4px" width="13.4" height="13.4" viewBox="0 0 13.4 13.4" ><path d="M6.7 0.4 V13 M0.4 6.7 H13" stroke="#b8b8b8" stroke-width="1.5" fill="none"/></svg>
<div class="hl" style="left:0;top:72px;width:969px;background:#323231"></div>
<svg class="ic" style="left:10px;top:49px" width="15.4" height="15" viewBox="0 0 15.4 15" ><g fill="none" stroke="#979797" stroke-width="1.2" stroke-linejoin="round" stroke-linecap="round"><rect x="0.6" y="0.6" width="5.8" height="5.6" rx=".8"/><rect x="9" y="0.6" width="5.8" height="5.6" rx=".8"/><rect x="0.6" y="8.8" width="5.8" height="5.6" rx=".8"/><rect x="9" y="8.8" width="5.8" height="5.6" rx=".8"/></g></svg>
<div class="vl" style="left:35.4px;top:50px;height:13px;background:#3c3c3b"></div>
<svg class="ic" style="left:44.8px;top:49px" width="10" height="15.4" viewBox="0 0 10 15.4" ><path d="M9 0.8 L1.2 7.7 L9 14.6" fill="none" stroke="#a0a0a0" stroke-width="1.5" stroke-linecap="round" stroke-linejoin="round"/></svg>
<svg class="ic" style="left:67px;top:49px" width="10" height="15.4" viewBox="0 0 10 15.4" ><path d="M1 0.8 L8.8 7.7 L1 14.6" fill="none" stroke="#6c6c6c" stroke-width="1.5" stroke-linecap="round" stroke-linejoin="round"/></svg>
<div class="vl" style="left:85.6px;top:50px;height:13px;background:#3c3c3b"></div>
<svg class="ic" style="left:111.6px;top:49.2px" width="14.6" height="14.6" viewBox="0 0 16 16" ><rect x="0" y="0" width="16" height="16" rx="3.6" fill="#3a8cf4"/><rect x="1.55" y="1.55" width="12.9" height="12.9" rx="2.3" fill="#3d92f7" stroke="#21529a" stroke-width="0.85"/><path d="M8.7 4.1 L4.7 11.5 M7.1 4.1 L11.6 11.9 M3.6 9.5 H12.4" fill="none" stroke="#1e2c46" stroke-width="1.3" stroke-linecap="round"/></svg>
<span class="t" style="left:130.63px;top:50.02px;font-size:13px;letter-spacing:0.053px;color:#dedede;">LocalChat</span>
<div class="abs" style="left:212.8px;top:41.4px;width:244.4px;height:30.6px;background:#506247"></div>
<svg class="ic" style="left:241px;top:50.6px" width="10.6" height="12.8" viewBox="0 0 13.5 16.5" ><g fill="none" stroke="#9fc0d4" stroke-width="1.4" stroke-linejoin="round"><path d="M2.6 0.8 H7.6 L12.7 5.9 V14 Q12.7 15.7 11 15.7 H2.6 Q0.8 15.7 0.8 14 V2.5 Q0.8 0.8 2.6 0.8 Z"/><path d="M7.6 0.8 V4.3 Q7.6 5.9 9.2 5.9 H12.7"/></g></svg>
<span class="t" style="left:258.97px;top:50.02px;font-size:13px;letter-spacing:0.189px;color:#f4f4f4;font-style:italic;">gemma-2-2b-it-Q4_K_M.gguf</span>
<svg class="ic" style="left:483.6px;top:50.6px" width="14" height="12.2" viewBox="2.2 3.2 18.6 16.8" preserveAspectRatio="none"><path d="M13.543 3.41c4.114 2.47 6.545 7.162 5.549 11.131-.024.093-.05.181-.076.272l.002.001c2.062 2.538 1.5 5.258 1.236 4.745-1.072-2.086-3.066-1.568-4.088-1.043a6.803 6.803 0 0 1-.281.158l-.02.012-.002.002c-2.115 1.123-4.957 1.205-7.812-.022a12.568 12.568 0 0 1-5.64-4.838c.649.48 1.35.902 2.097 1.252 3.019 1.414 6.051 1.311 8.197-.002C9.651 12.73 7.101 9.67 5.146 7.191a10.628 10.628 0 0 1-1.005-1.384c2.34 2.142 6.038 4.83 7.365 5.576C8.69 8.408 6.208 4.743 6.324 4.86c4.436 4.47 8.528 6.996 8.528 6.996.154.085.27.154.36.213.085-.215.16-.437.224-.668.708-2.588-.09-5.548-1.893-7.992z" fill="#ef8634"/></svg>
<span class="t" style="left:502.14px;top:50.02px;font-size:13px;letter-spacing:0.140px;color:#dedede;">ChatViewModel</span>
<div class="vl" style="left:617.4px;top:50px;height:13px;background:#3c3c3b"></div>
<svg class="ic" style="left:909px;top:49px" width="14" height="15" viewBox="0 0 14 15" ><g fill="none" stroke="#9c9c9c" stroke-width="1.2" stroke-linecap="round" stroke-linejoin="round"><path d="M2.6 4.6 H12.8 M9.4 1 L13 4.6 L9.4 8.2"/><path d="M11.4 10.4 H1.2 M4.6 6.8 L1 10.4 L4.6 14"/></g></svg>
<div class="vl" style="left:934px;top:50px;height:13px;background:#3c3c3b"></div>
<svg class="ic" style="left:945px;top:49px" width="14.4" height="15" viewBox="0 0 14.4 15" ><g fill="none" stroke="#9c9c9c" stroke-width="1.2" stroke-linecap="round"><rect x="0.6" y="0.6" width="13.2" height="13.8" rx="2.6"/><path d="M5 0.8 V14.2"/><path d="M7.4 7.5 H11.6 M9.5 5.4 V9.6" stroke-width="1.1"/></g></svg>
<div class="hl" style="left:0;top:103px;width:969px;background:#333332"></div>
<svg class="ic" style="left:10px;top:80.2px" width="14.4" height="14.4" viewBox="0 0 16 16" ><rect x="0" y="0" width="16" height="16" rx="3.6" fill="#3a8cf4"/><rect x="1.55" y="1.55" width="12.9" height="12.9" rx="2.3" fill="#3d92f7" stroke="#21529a" stroke-width="0.85"/><path d="M8.7 4.1 L4.7 11.5 M7.1 4.1 L11.6 11.9 M3.6 9.5 H12.4" fill="none" stroke="#1e2c46" stroke-width="1.3" stroke-linecap="round"/></svg>
<span class="t" style="left:29.73px;top:81.02px;font-size:13px;letter-spacing:0.065px;color:#dcdcdc;">LocalChat</span>
<svg class="ic" style="left:95.2px;top:82.4px" width="5" height="11.6" viewBox="0 0 5 11.6" ><path d="M0.8 0.6 Q3.4 3.6 3.8 5.8 Q3.4 8 0.8 11" fill="none" stroke="#8e8e8e" stroke-width="1.1" stroke-linecap="round"/></svg>
<svg class="ic" style="left:109.2px;top:81.6px" width="14.6" height="11.6" viewBox="0 0 18 14.5" preserveAspectRatio="none"><path d="M0 2.2 Q0 0.6 1.6 0.6 H5.6 Q6.5 0.6 7.1 1.3 L7.9 2.2 H16.2 Q18 2.2 18 4 V12.4 Q18 14.5 15.9 14.5 H2.1 Q0 14.5 0 12.4 Z" fill="#50a7d8"/><path d="M0 4.9 H18" stroke="#27607f" stroke-width="1.1"/></svg>
<span class="t" style="left:129.23px;top:81.02px;font-size:13px;letter-spacing:0.040px;color:#dcdcdc;">LocalChat</span>
<svg class="ic" style="left:195px;top:82.4px" width="5" height="11.6" viewBox="0 0 5 11.6" ><path d="M0.8 0.6 Q3.4 3.6 3.8 5.8 Q3.4 8 0.8 11" fill="none" stroke="#8e8e8e" stroke-width="1.1" stroke-linecap="round"/></svg>
<svg class="ic" style="left:211px;top:81.2px" width="10.8" height="13" viewBox="0 0 13.5 16.5" ><g fill="none" stroke="#9fc0d4" stroke-width="1.4" stroke-linejoin="round"><path d="M2.6 0.8 H7.6 L12.7 5.9 V14 Q12.7 15.7 11 15.7 H2.6 Q0.8 15.7 0.8 14 V2.5 Q0.8 0.8 2.6 0.8 Z"/><path d="M7.6 0.8 V4.3 Q7.6 5.9 9.2 5.9 H12.7"/></g></svg>
<span class="t" style="left:229.45px;top:81.02px;font-size:13px;letter-spacing:0.373px;color:#dcdcdc;">gemma-2-2b-it-Q4_K_M.gguf</span>
<svg class="ic" style="left:414.6px;top:82.4px" width="5" height="11.6" viewBox="0 0 5 11.6" ><path d="M0.8 0.6 Q3.4 3.6 3.8 5.8 Q3.4 8 0.8 11" fill="none" stroke="#8e8e8e" stroke-width="1.1" stroke-linecap="round"/></svg>
<span class="t" style="left:425.93px;top:81.02px;font-size:13px;letter-spacing:0.200px;color:#dcdcdc;">No Selection</span>
<svg class="ic" style="left:368.2px;top:180px" width="232.8" height="295.4" viewBox="0 0 232.8 295.4" ><defs><linearGradient id="pg" x1="0" y1="0" x2="1" y2="1"><stop offset="0" stop-color="#f4f4f4"/><stop offset=".55" stop-color="#efefef"/><stop offset="1" stop-color="#fbfbfb"/></linearGradient><linearGradient id="fl" x1="0" y1="1" x2="1" y2="0"><stop offset="0" stop-color="#ffffff"/><stop offset=".3" stop-color="#f6f6f6"/><stop offset=".5" stop-color="#e6e6e6"/></linearGradient><filter id="ds" x="-10%" y="-10%" width="120%" height="120%"><feGaussianBlur stdDeviation="1.6"/></filter><filter id="fs" x="-40%" y="-40%" width="180%" height="180%"><feGaussianBlur stdDeviation="5.5"/></filter><clipPath id="pc"><path d="M27 20 H137.5 Q141.5 20 144.5 23 L210 88.5 Q212.8 91.5 212.8 95.500 V268.400 Q212.800 275.400 205.800 275.400 H27 Q20 275.400 20 268.400 V27 Q20 20 27 20 Z"/></clipPath></defs><path d="M27 20 H137.5 Q141.5 20 144.5 23 L210 88.5 Q212.8 91.5 212.8 95.500 V268.400 Q212.800 275.400 205.800 275.400 H27 Q20 275.400 20 268.400 V27 Q20 20 27 20 Z" fill="#000" opacity=".5" filter="url(#ds)" transform="translate(0 1.6)"/><path d="M27 20 H137.5 Q141.5 20 144.5 23 L210 88.5 Q212.8 91.5 212.8 95.500 V268.400 Q212.800 275.400 205.800 275.400 H27 Q20 275.400 20 268.400 V27 Q20 20 27 20 Z" fill="url(#pg)"/><g clip-path="url(#pc)"><path d="M141 21 Q143.200 21.600 144.500 23 L210 88.500 Q211.600 90.200 212 92 H150 Q141 92 141 83 Z" fill="#000" opacity=".42" filter="url(#fs)" transform="translate(-2.5 4.5)"/></g><path d="M141 21 Q143.200 21.600 144.500 23 L210 88.500 Q211.600 90.200 212 92 H150 Q141 92 141 83 Z" fill="url(#fl)"/></svg>
<div class="hl" style="left:0;top:562px;width:969px;height:1.6px;background:#070707"></div>
<div class="hl" style="left:0;top:594px;width:969px;height:1.4px;background:#070707"></div>
<svg class="ic" style="left:12.8px;top:573.2px" width="17.2" height="10.6" viewBox="0 0 17.2 10.6" ><path d="M2 0 H12.6 Q13.6 0 14.2 0.8 L16.8 4.4 Q17.4 5.3 16.8 6.2 L14.2 9.8 Q13.6 10.6 12.6 10.6 H2 Q0 10.6 0 8.6 V2 Q0 0 2 0 Z" fill="#3478f6"/></svg>
<svg class="ic" style="left:940.8px;top:571px" width="14.4" height="15.2" viewBox="0 0 14.4 15.2" ><g fill="none" stroke="#a8a8a8" stroke-width="1.2"><rect x="0.6" y="0.6" width="13.2" height="14" rx="2.8"/></g><rect x="2.6" y="9" width="9.2" height="3.2" rx=".9" fill="#b4b4b4"/></svg>
<div class="abs" style="left:333.6px;top:595.4px;width:1.4px;height:400px;background:#070707"></div>
<div class="abs" style="left:335px;top:595.4px;width:634px;height:400px;background:#292a2f"></div>
<span class="t" style="left:9.67px;top:982.02px;font-size:13px;letter-spacing:-0.057px;color:#ececec;">Auto</span>
<svg class="ic" style="left:40.2px;top:983.4px" width="6.4" height="10" viewBox="0 0 6.4 10" ><path d="M1 3.6 L3.2 1.2 L5.4 3.6 M1 6.4 L3.2 8.8 L5.4 6.4" fill="none" stroke="#d6d6d6" stroke-width="1.2" stroke-linecap="round" stroke-linejoin="round"/></svg>
<div class="vl" style="left:61.4px;top:982px;height:13px;background:#3c3c3b"></div>
<svg class="ic" style="left:73.6px;top:982.8px" width="16" height="10.8" viewBox="0 0 16 10.8" ><g fill="none" stroke="#5a5a59" stroke-width="1.2"><path d="M0.8 5.4 Q8 -3.4 15.200 5.400 Q8 14.200 0.800 5.400 Z"/><circle cx="8" cy="5.4" r="2.4"/></g></svg>
<svg class="ic" style="left:104px;top:981px" width="14.4" height="14.4" viewBox="0 0 14.4 14.4" ><g fill="none" stroke="#5a5a59" stroke-width="1.2" stroke-linecap="round"><circle cx="7.2" cy="7.2" r="6.5"/><path d="M7.2 6.6 V10.6"/></g><circle cx="7.2" cy="4.2" r=".9" fill="#5a5a59"/></svg>
<div class="abs" style="left:134.4px;top:976px;width:194px;height:26px;border-radius:6px;background:#2a2a29;border:1px solid #3d3d3c"></div>
<svg class="ic" style="left:140.8px;top:981px" width="14.2" height="14.2" viewBox="0 0 14.2 14.2" ><g fill="none" stroke="#7a7a79" stroke-width="1.1" stroke-linecap="round"><circle cx="7.1" cy="7.1" r="6.4"/><path d="M3.8 5 H10.4 M4.9 7.2 H9.3 M6 9.4 H8.2"/></g></svg>
<span class="t" style="left:157.93px;top:982.02px;font-size:13px;letter-spacing:0.279px;color:#747473;">Filter</span>
<svg class="ic" style="left:344px;top:982.8px" width="16" height="10.8" viewBox="0 0 16 10.8" ><g fill="none" stroke="#5c5d62" stroke-width="1.2"><path d="M0.8 5.4 Q8 -3.4 15.200 5.400 Q8 14.200 0.800 5.400 Z"/><circle cx="8" cy="5.4" r="2.4"/></g></svg>
<svg class="ic" style="left:371.4px;top:980.6px" width="13" height="15" viewBox="0 0 13 15" ><rect x="0" y="0" width="13" height="6.6" rx="3.3" fill="#3478f6"/><circle cx="9.4" cy="3.3" r="1.9" fill="#292a2f"/><rect x="0" y="8.6" width="13" height="6.6" rx="3.3" fill="#3478f6"/><circle cx="3.6" cy="11.9" r="1.9" fill="#292a2f"/></svg>
<div class="abs" style="left:682.4px;top:976px;width:193.4px;height:26px;border-radius:6px;background:#2e2f32;border:1px solid #3f4044"></div>
<svg class="ic" style="left:686.8px;top:981px" width="29" height="14" viewBox="0 0 29 14" ><g fill="none" stroke="#8a8a8c" stroke-width="1.1" stroke-linecap="round"><rect x="0.6" y="0.6" width="27.8" height="12.800" rx="6.400"/><path d="M5.6 4.6 H13.4 M7 7 H12 M8.4 9.4 H10.6"/><path d="M18.8 5.8 L21.2 8.2 L23.6 5.8" stroke-width="1.3"/></g></svg>
<span class="t" style="left:719.53px;top:982.02px;font-size:13px;letter-spacing:0.159px;color:#6d6e72;">Filter</span>
<svg class="ic" style="left:886.6px;top:981.4px" width="12.6" height="14" viewBox="0 0 12.6 14" ><g fill="none" stroke="#8c8c8e" stroke-width="1.1" stroke-linecap="round"><path d="M0.6 2.8 H12 M4.4 2.6 V1.2 Q4.4 0.6 5 0.6 H7.600 Q8.200 0.600 8.200 1.200 V2.600"/><path d="M1.8 3 L2.6 14 H10 L10.8 3 M4.6 5 V13 M6.3 5 V13 M8 5 V13"/></g></svg>
<div class="vl" style="left:910px;top:982px;height:13px;background:#46474b"></div>
<svg class="ic" style="left:921.4px;top:980.4px" width="14" height="15" viewBox="0 0 14 15" ><rect x="0.7" y="0.7" width="12.6" height="14" rx="2.6" fill="none" stroke="#3478f6" stroke-width="1.3"/><rect x="3" y="3" width="3" height="10" rx=".8" fill="#3478f6"/></svg>
<svg class="ic" style="left:944.4px;top:980.4px" width="14" height="15" viewBox="0 0 14 15" ><rect x="0.7" y="0.7" width="12.6" height="14" rx="2.6" fill="none" stroke="#3478f6" stroke-width="1.3"/><rect x="8" y="3" width="3" height="10" rx=".8" fill="#3478f6"/></svg>
</div>
<div id="vd2"></div>
<div id="insp">
<div class="hl" style="left:0;top:40px;width:286px;background:#3a3a39"></div>
<div class="hl" style="left:0;top:72px;width:286px;background:#3a3a39"></div>
<svg class="ic" style="left:251.8px;top:9.8px" width="21.9" height="17.3" viewBox="0 0 21.9 17.3" ><g fill="none" stroke="#a2a2a2" stroke-width="1.35"><rect x="0.7" y="0.7" width="20.5" height="15.9" rx="3.4"/><path d="M14.1 0.7 V16.600"/><path d="M16.400 4.700 H19 M16.400 6.800 H19 M16.400 9.600 H19" stroke-width="1.1" stroke-linecap="round"/></g></svg>
<svg class="ic" style="left:282.4px;top:0px" width="3.6" height="3.6" viewBox="0 0 5 5" ><path d="M5 0 H0.400 Q5 0 5 4.600 Z" fill="#050505"/><path d="M5 4.800 Q4.800 0.200 0.200 0" fill="none" stroke="#7a7a7a" stroke-width="0.9"/></svg>
<svg class="ic" style="left:106px;top:49px" width="12.6" height="15.4" viewBox="0 0 12.6 15.4" ><path d="M2 0 H6.6 V4.2 Q6.6 6 8.4 6 H12.6 V13.4 Q12.6 15.4 10.6 15.4 H2 Q0 15.4 0 13.400 V2 Q0 0 2 0 Z" fill="#3b82f6"/><path d="M7.8 0.2 L12.400 4.800 H8.800 Q7.800 4.800 7.800 3.800 Z" fill="#3b82f6"/></svg>
<svg class="ic" style="left:137.4px;top:48.8px" width="15.4" height="15.4" viewBox="0 0 15.4 15.4" ><g fill="none" stroke="#a2a2a2" stroke-width="1.2" stroke-linecap="round"><circle cx="7.7" cy="7.7" r="7"/><path d="M7.7 3.6 V7.700 H4.800"/></g></svg>
<svg class="ic" style="left:170.6px;top:48.8px" width="15.4" height="15.4" viewBox="0 0 15.4 15.4" ><circle cx="7.7" cy="7.7" r="7" fill="none" stroke="#a2a2a2" stroke-width="1.2"/><text x="7.7" y="11.4" font-size="10.5" font-family="Liberation Sans, sans-serif" font-weight="bold" fill="#a2a2a2" text-anchor="middle">?</text></svg>
<span class="t" style="left:6.89px;top:79.72px;font-size:13.6px;letter-spacing:0.402px;color:#a0a0a0;font-weight:bold;">Identity and Type</span>
<span class="t" style="left:57.14px;top:110.67px;font-size:11.7px;letter-spacing:0.257px;color:#e6e6e6;-webkit-text-stroke:0.2px #e6e6e6;">Name</span>
<div class="fld" style="left:94.6px;top:108.4px;width:187px;height:16.6px;background:#313130;border-radius:0;border:1px solid #3a3a39"></div>
<span class="t" style="left:97.95px;top:110.02px;font-size:13px;letter-spacing:0.369px;color:#e6e6e6;">gemma-2-2b-it-Q4_K_M.gguf</span>
<span class="t" style="left:63.04px;top:134.67px;font-size:11.7px;letter-spacing:0.024px;color:#e6e6e6;-webkit-text-stroke:0.2px #e6e6e6;">Type</span>
<div class="fld" style="left:94.6px;top:131.8px;width:187px;height:17.6px;background:#5c5c5b"></div>
<span class="t" style="left:100.73px;top:134.02px;font-size:13px;letter-spacing:0.182px;color:#ececec;">Default - Data</span>
<svg class="ic" style="left:265.8px;top:133.4px" width="14.2" height="14.2" viewBox="0 0 14.2 14.2" ><rect width="14.2" height="14.2" rx="3.6" fill="#2f6fe4"/><path d="M4.6 5.6 L7.100 3.200 L9.600 5.600 M4.600 8.600 L7.100 11 L9.600 8.600" fill="none" stroke="#fff" stroke-width="1.3" stroke-linecap="round" stroke-linejoin="round"/></svg>
<div class="hl" style="left:8.6px;top:155.6px;width:273px;background:#3c3c3b"></div>
<span class="t" style="left:42.14px;top:164.67px;font-size:11.7px;letter-spacing:0.426px;color:#e6e6e6;-webkit-text-stroke:0.2px #e6e6e6;">Location</span>
<div class="fld" style="left:94.6px;top:162.2px;width:187px;height:17.8px;background:#3b3b3a"></div>
<span class="t" style="left:100.73px;top:164.02px;font-size:13px;letter-spacing:0.041px;color:#737372;">Relative to Group</span>
<svg class="ic" style="left:269.6px;top:165.6px" width="6.4" height="10.4" viewBox="0 0 6.4 10.4" ><path d="M1 3.8 L3.2 1.4 L5.4 3.800 M1 6.600 L3.200 9 L5.400 6.600" fill="none" stroke="#6a6a69" stroke-width="1.2" stroke-linecap="round" stroke-linejoin="round"/></svg>
<span class="t" style="left:95.75px;top:187.02px;font-size:13px;letter-spacing:0.369px;color:#ececec;">gemma-2-2b-it-Q4_K_M.gguf</span>
<span class="t" style="left:41.54px;top:207.67px;font-size:11.7px;letter-spacing:0.206px;color:#e6e6e6;-webkit-text-stroke:0.2px #e6e6e6;">Full Path</span>
<div class="abs" style="left:96px;top:205px;width:168px;height:67px;background:#fff"></div>
<svg class="ic" style="left:266px;top:254.2px" width="11.6" height="11.6" viewBox="0 0 11.6 11.6" ><circle cx="5.8" cy="5.8" r="5.8" fill="#b2b2b2"/><path d="M2.8 5.8 H8.600 M6.400 3.400 L8.800 5.800 L6.400 8.200" fill="none" stroke="#2b2b28" stroke-width="1.3" stroke-linecap="round" stroke-linejoin="round"/></svg>
<div class="hl" style="left:8.6px;top:282.8px;width:273px;background:#3c3c3b"></div>
<span class="t" style="left:7.34px;top:291.72px;font-size:13.6px;letter-spacing:0.119px;color:#a0a0a0;font-weight:bold;">On Demand Resource Tags</span>
<div class="abs" style="left:9px;top:319.4px;width:272.6px;height:20.2px;background:#30302f;border:1px solid #3f3f3e;border-top-color:#363635"></div>
<span class="t" style="left:12.93px;top:323.02px;font-size:12px;letter-spacing:0.275px;color:#636362;">Tags</span>
<div class="hl" style="left:8.6px;top:354.6px;width:273px;background:#3c3c3b"></div>
<span class="t" style="left:6.99px;top:363.72px;font-size:13.6px;letter-spacing:0.324px;color:#a0a0a0;font-weight:bold;">Localization</span>
<div class="fld" style="left:9.4px;top:394px;width:271px;height:18px;background:#676766;border-radius:5.5px"></div>
<span class="t" style="left:115.17px;top:397.77px;font-size:12.5px;letter-spacing:0.279px;color:#f2f2f2;">Localize...</span>
<div class="hl" style="left:8.6px;top:431.6px;width:273px;background:#3c3c3b"></div>
<span class="t" style="left:7.75px;top:440.72px;font-size:13.6px;letter-spacing:0.323px;color:#a0a0a0;font-weight:bold;">Target Membership</span>
<div class="abs" style="left:8.4px;top:462.2px;width:273px;height:122px;background:#1e1e1d;border:1px solid #4c4c4b"></div>
<div class="hl" style="left:9.4px;top:561.2px;width:271px;background:#3a3a39"></div>
<svg class="ic" style="left:21.8px;top:470.8px" width="27" height="27" viewBox="0 0 16 16" ><rect x="0" y="0" width="16" height="16" rx="2.6" fill="#a2a2a2"/><g fill="none" stroke="#262626" stroke-width="1.05" stroke-linecap="round"><path d="M9.1 3.7 L5.9 9.1"/><path d="M4.6 10.8 L3.9 11.9"/><path d="M7.2 3.9 L11.8 11.9"/><path d="M3.1 9.5 H9.2"/><path d="M11.4 9.5 H13"/></g></svg>
<span class="t" style="left:56.67px;top:470.77px;font-size:12.5px;letter-spacing:0.416px;color:#f0f0f0;">LocalChat</span>
<span class="t" style="left:56.67px;top:486.77px;font-size:12.5px;letter-spacing:0.552px;color:#a4a4a4;">Default</span>
<svg class="ic" style="left:18.6px;top:567.8px" width="11" height="11" viewBox="0 0 11 11" ><path d="M5.5 0.6 V10.400 M0.600 5.500 H10.400" stroke="#f0f0f0" stroke-width="1.6" fill="none"/></svg>
<div class="vl" style="left:40.4px;top:567.6px;height:11.6px;background:#444443"></div>
<svg class="ic" style="left:51.4px;top:572.6px" width="10.6" height="1.6" viewBox="0 0 10.6 1.6" ><rect width="10.6" height="1.5" fill="#7c7c7b"/></svg>
<div class="vl" style="left:72.6px;top:567.6px;height:11.6px;background:#444443"></div>
<svg class="ic" style="left:83.4px;top:567.8px" width="11" height="11" viewBox="0 0 11 11" ><path d="M1 10 L2.200 7.400 L8.600 1 L10 2.400 L3.600 8.800 Z" fill="#7c7c7b"/></svg>
<div class="hl" style="left:8.6px;top:594.2px;width:273px;background:#3c3c3b"></div>
</div>
</div>
</body>
</html>
